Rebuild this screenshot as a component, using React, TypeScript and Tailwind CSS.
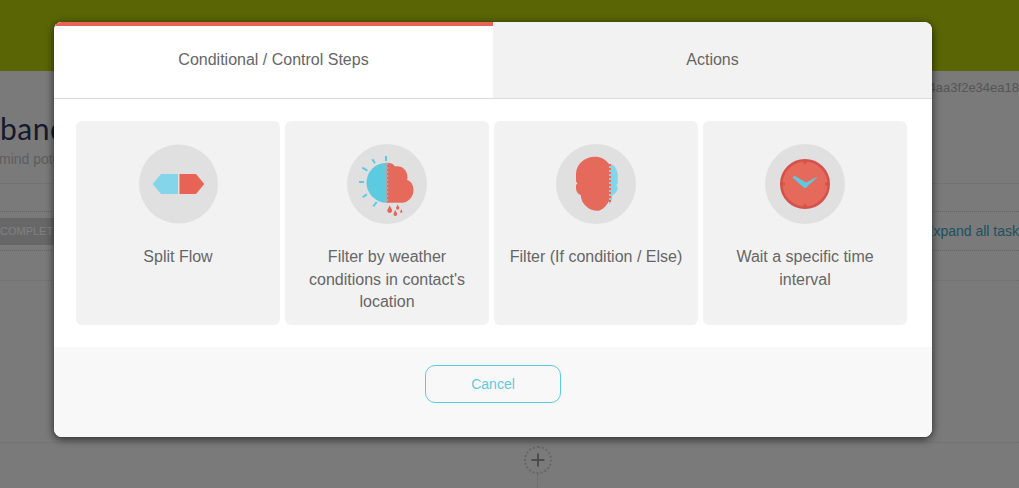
const steps = [
  { title: "Split Flow", icon: <SplitIcon /> },
  { title: "Filter by weather conditions in contact's location", icon: <WeatherIcon /> },
  { title: "Filter (If condition / Else)", icon: <HeadIcon /> },
  { title: "Wait a specific time interval", icon: <ClockIcon /> },
];

function SplitIcon() {
  return (
    <svg viewBox="-1 0 80 80" className="w-20 h-20">
      <circle cx="39.5" cy="40" r="39.5" fill="#e0e0e0" />
      <path d="M13.7 40 L22 30 H39 V50 H22 Z" fill="#85d5ea" />
      <path d="M40.5 30 H57 L65.3 40 L57 50 H40.5 Z" fill="#e66356" />
    </svg>
  );
}

function WeatherIcon() {
  return (
    <svg viewBox="0 0 80 80" className="w-20 h-20">
      <circle cx="40" cy="40" r="40" fill="#e0e0e0" />
      <path d="M39.5 18.7 A20 20 0 0 0 39.5 58.7 Z" fill="#5ccbe0" />
      <path
        d="M39.5 18.7 C44 18.5 46.5 20 48 22.5 C53 21.5 60 24 60.5 33 C60.5 34 60.5 35 60 36 C64 37 66.5 41 66.5 46 C66.5 53 61 58.7 55 58.7 L39.5 58.7 Z"
        fill="#e66a5b"
      />
      <path d="M40.5 19 V58.5" stroke="#5ccbe0" strokeWidth="1.6" strokeDasharray="2 2" />
      <g stroke="#5ccbe0" strokeWidth="2">
        <path d="M39 12 V17" />
        <path d="M25.3 15.3 L28 19.3" />
        <path d="M15.3 23.7 L20.3 26.7" />
        <path d="M12 38 H17" />
        <path d="M15.7 53.3 L20 50.3" />
        <path d="M26.3 62.3 L29.7 58" />
      </g>
      <g fill="#e66356">
        <path d="M42.7 61.5 L45 66 A2.4 2.4 0 1 1 40.4 66 Z" />
        <path d="M50.7 60.5 L52.2 63.5 A1.6 1.6 0 1 1 49.2 63.5 Z" />
        <path d="M48.3 66 L50 69.5 A1.8 1.8 0 1 1 46.6 69.5 Z" />
        <path d="M54.3 65 L55.3 67.2 A1.1 1.1 0 1 1 53.3 67.2 Z" />
      </g>
    </svg>
  );
}

function HeadIcon() {
  return (
    <svg viewBox="0 0 80 80" className="w-20 h-20">
      <circle cx="40" cy="40" r="40" fill="#e0e0e0" />
      <path
        d="M53 20 L55 20 C58 21 61.5 25 61.7 31 L61.7 39 L60.5 41 L61.7 44 C61.5 47 59.5 50 56.5 51 C56.5 54 55.5 57 54 60 L53 60 Z"
        fill="#85d5ea"
      />
      <path
        d="M53 20 C49 15 45 12.7 39 12.7 C28 12.7 20 21 20 30 L20 37.5 L21.5 39.5 L20 41 L20 45 C20.5 48 22.5 50.5 24.7 51 C25 56 27 60 31 63 C34 65.5 37 66.8 41 66.8 C45 66.8 49 64 53 57 Z"
        fill="#e66a5b"
      />
      <path d="M54 20 V60" stroke="#e66a5b" strokeWidth="2" strokeDasharray="2 2" />
    </svg>
  );
}

function ClockIcon() {
  return (
    <svg viewBox="0 0 80 80" className="w-20 h-20">
      <circle cx="40" cy="40" r="40" fill="#e0e0e0" />
      <circle cx="40" cy="40" r="23.7" fill="#e66a5b" stroke="#d4524a" strokeWidth="2.6" />
      <g stroke="#d4524a" strokeWidth="2.5">
        <path d="M40 16 V20" />
        <path d="M40 60 V64" />
        <path d="M16 40 H20" />
        <path d="M60 40 H64" />
      </g>
      <path d="M27.8 33.8 L29 31.6 L41 38.6 L51.7 33 L52 33.8 L43 41.5 A3 3 0 0 1 37.5 42.5 Z" fill="#5ccbe0" />
    </svg>
  );
}

export default function App() {
  return (
    <div className="relative h-[488px] w-[1019px] overflow-hidden bg-[#f5f5f5] font-['Liberation_Sans',Arial,sans-serif]">
      {/* page behind the dialog */}
      <div className="h-[71px] bg-[#b4cc0a]" />
      <div className="h-[113px] border-b border-[#e2e2e2]">
        <div className="flex justify-end pt-[9px] text-[13px] leading-4 text-[#aaa]">
          <span className="whitespace-nowrap">94aa3f2e34ea18</span>
        </div>
        <h1 className="mt-[12px] whitespace-nowrap font-['Lato',sans-serif] text-[30px] leading-[40px] tracking-[0.5px] text-[#2c3554]">
          bandoned
        </h1>
        <p className="-ml-[1px] mt-[1px] whitespace-nowrap text-[14px] leading-5 text-[#bbb]">mind potential</p>
      </div>
      <div className="h-[28px] border-b border-dotted border-[#ccc]" />
      <div className="flex h-[39px] items-center justify-between border-b border-dotted border-[#ccc]">
        <span className="-ml-[13px] flex h-[27px] w-[90px] items-center bg-[#cfcfcf] pl-[2px] text-[11px] text-white">
          INCOMPLETE
        </span>
        <span className="-mr-[7px] whitespace-nowrap text-[14px] text-[#3ba3c1]">Expand all tasks</span>
      </div>
      <div className="h-[30px] border-b border-dotted border-[#ddd]" />
      <div className="h-[162px] border-b border-dotted border-[#ddd]" />
      <div className="ml-[524px] mt-[3px] flex h-[28px] w-[28px] items-center justify-center rounded-full border-2 border-dotted border-[#ccc] text-[#999]">
        <svg viewBox="0 0 14 14" className="h-[14px] w-[14px]">
          <path d="M7 0.5 V13.5 M0.5 7 H13.5" stroke="currentColor" strokeWidth="2" />
        </svg>
      </div>
      <div className="ml-[537px] h-[16px] border-l border-dotted border-[#ccc]" />

      {/* dialog overlay */}
      <div className="absolute inset-0 bg-black/50 pl-[54px] pt-[22px]">
        <div className="w-[878px] overflow-hidden rounded-lg bg-white shadow-[0_2px_8px_rgba(0,0,0,0.7)]">
          <div className="flex h-[77px] border-b border-[#dcdcdc] text-[16px] text-[#666]">
            <div className="flex w-[439px] items-center justify-center border-t-4 border-[#e66356] bg-white pb-[4px]">
              Conditional / Control Steps
            </div>
            <div className="flex flex-1 items-center justify-center bg-[#f2f2f2]">Actions</div>
          </div>
          <div className="flex h-[248px] gap-[5px] pl-[22px] pt-[22px]">
            {steps.map((step) => (
              <div
                key={step.title}
                className="flex h-[204px] w-[204px] flex-col items-center rounded-md bg-[#f2f2f2] px-[10px] pt-[23px] text-center text-[16px] leading-[22.5px] text-[#666]"
              >
                {step.icon}
                <div className="mt-[22px]">{step.title}</div>
              </div>
            ))}
          </div>
          <div className="flex h-[90px] justify-center bg-[#f8f8f8] pt-[18px]">
            <button className="h-[38px] w-[136px] rounded-[10px] border border-[#5ccbe0] text-[14px] text-[#5ccbe0]">
              Cancel
            </button>
          </div>
        </div>
      </div>
    </div>
  );
}
